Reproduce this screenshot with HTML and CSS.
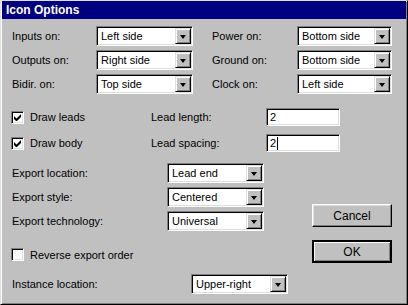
FILE: index.html
```html
<!DOCTYPE html>
<html lang="en">
  <head>
    <meta charset="UTF-8" />
    <title>Icon Options</title>
    <link rel="stylesheet" href="styles.css">
  </head>
  <body>
    <div class="window">
      <div class="titlebar">Icon Options</div>

      <div class="content">
        <!-- pin sides -->
        <div class="sides">
          <div class="col">
            <div class="row"><span class="lbl w84">Inputs on:</span><div class="combo w97"><span class="val">Left side</span><span class="arrow"></span></div></div>
            <div class="row"><span class="lbl w84">Outputs on:</span><div class="combo w97"><span class="val">Right side</span><span class="arrow"></span></div></div>
            <div class="row"><span class="lbl w84">Bidir. on:</span><div class="combo w97"><span class="val">Top side</span><span class="arrow"></span></div></div>
          </div>
          <div class="col">
            <div class="row"><span class="lbl w85">Power on:</span><div class="combo w95"><span class="val">Bottom side</span><span class="arrow"></span></div></div>
            <div class="row"><span class="lbl w85">Ground on:</span><div class="combo w95"><span class="val">Bottom side</span><span class="arrow"></span></div></div>
            <div class="row"><span class="lbl w85">Clock on:</span><div class="combo w95"><span class="val">Left side</span><span class="arrow"></span></div></div>
          </div>
        </div>

        <!-- leads -->
        <div class="leads">
          <div class="crow">
            <label class="check w140"><span class="box checked"><svg width="7" height="7" viewBox="0 0 7 7"><path d="M0 2v3l2 2h1l4-4V0L2.5 4.5z" fill="#000"/></svg></span>Draw leads</label>
            <span class="lbl w115">Lead length:</span>
            <div class="field"><span class="val">2</span></div>
          </div>
          <div class="crow">
            <label class="check w140"><span class="box checked"><svg width="7" height="7" viewBox="0 0 7 7"><path d="M0 2v3l2 2h1l4-4V0L2.5 4.5z" fill="#000"/></svg></span>Draw body</label>
            <span class="lbl w115">Lead spacing:</span>
            <div class="field"><span class="val">2</span><span class="caret"></span></div>
          </div>
        </div>

        <!-- export -->
        <div class="lower">
          <div class="left-col">
            <div class="row"><span class="lbl w155">Export location:</span><div class="combo w97"><span class="val">Lead end</span><span class="arrow"></span></div></div>
            <div class="row"><span class="lbl w155">Export style:</span><div class="combo w97"><span class="val">Centered</span><span class="arrow"></span></div></div>
            <div class="row"><span class="lbl w155">Export technology:</span><div class="combo w97"><span class="val">Universal</span><span class="arrow"></span></div></div>
            <label class="check reverse"><span class="box"></span>Reverse export order</label>
          </div>
          <div class="right-col">
            <button class="btn cancel">Cancel</button>
            <button class="btn ok">OK</button>
          </div>
        </div>

        <div class="row instance"><span class="lbl w179">Instance location:</span><div class="combo w97"><span class="val">Upper-right</span><span class="arrow"></span></div></div>
      </div>
    </div>
  </body>
</html>
```

FILE: styles.css
```css
body,
html {
  margin: 0;
  padding: 0;
}
body {
  font-family: "Liberation Sans", Arial, sans-serif;
  font-size: 11px;
  color: #000;
}
/* the dialog frame, win95 raised edge */
.window {
  width: 408px;
  height: 305px;
  box-sizing: border-box;
  background: #c0c0c0;
  border: 1px solid;
  border-color: #dfdfdf #000 #000 #dfdfdf;
  box-shadow: inset 1px 1px #fff, inset -1px -1px #808080;
  padding: 0 1px 1px 1px;
}
.titlebar {
  height: 18px;
  line-height: 18px;
  background: #000080;
  color: #fff;
  font-weight: bold;
  font-size: 12px;
  padding-left: 4px;
}
.content {
  padding: 7px 0 0 10px;
}
.sides {
  display: flex;
  gap: 19px;
}
.col {
  display: flex;
  flex-direction: column;
  gap: 4px;
}
.row {
  display: flex;
  align-items: center;
  height: 20px;
}
.lbl {
  white-space: nowrap;
}
.w84 { width: 84px; }
.w85 { width: 85px; }
.w115 { width: 115px; }
.w140 { width: 140px; }
.w155 { width: 155px; }
.w179 { width: 179px; }
.w95 { width: 95px; }
.w97 { width: 97px; }

/* sunken combo box */
.combo,
.field {
  box-sizing: border-box;
  display: flex;
  align-items: center;
  background: #fff;
  border: 1px solid;
  border-color: #808080 #fff #fff #808080;
  box-shadow: inset 1px 1px #000, inset -1px -1px #dfdfdf;
}
.combo {
  height: 20px;
  padding: 1px;
}
.combo .val {
  flex: 1;
  padding-left: 3px;
  white-space: nowrap;
  overflow: hidden;
}
.arrow {
  box-sizing: border-box;
  width: 16px;
  height: 16px;
  background: #c0c0c0;
  border: 1px solid;
  border-color: #dfdfdf #000 #000 #dfdfdf;
  box-shadow: inset 1px 1px #fff, inset -1px -1px #808080;
  display: flex;
  align-items: center;
  justify-content: center;
}
.arrow::after {
  content: "";
  border-left: 3.5px solid transparent;
  border-right: 3.5px solid transparent;
  border-top: 4px solid #000;
  margin-top: 1px;
}

.leads {
  margin-top: 14px;
  display: flex;
  flex-direction: column;
  gap: 8px;
}
.crow {
  display: flex;
  align-items: center;
  height: 18px;
}
.field {
  width: 74px;
  height: 18px;
  padding-left: 3px;
}
.caret {
  width: 1px;
  height: 13px;
  background: #000;
  margin-left: 1px;
}

.check {
  display: flex;
  align-items: center;
  gap: 6px;
  margin-left: -1px;
  white-space: nowrap;
}
.box {
  box-sizing: border-box;
  width: 13px;
  height: 13px;
  background: #fff;
  border: 1px solid;
  border-color: #808080 #fff #fff #808080;
  box-shadow: inset 1px 1px #000, inset -1px -1px #dfdfdf;
  display: flex;
  align-items: center;
  justify-content: center;
}

.lower {
  margin-top: 11px;
  display: flex;
}
.left-col {
  width: 300px;
  display: flex;
  flex-direction: column;
  gap: 4px;
}
.reverse {
  margin-top: 13px;
  height: 13px;
}
.right-col {
  display: flex;
  flex-direction: column;
}
.btn {
  box-sizing: border-box;
  width: 80px;
  height: 23px;
  font-family: inherit;
  font-size: 12px;
  background: #c0c0c0;
  border: 1px solid;
  border-color: #fff #000 #000 #fff;
  box-shadow: inset -1px -1px #808080, inset 1px 1px #dfdfdf;
  padding: 0;
}
.cancel {
  margin-top: 41px;
}
.ok {
  margin-top: 13px;
  border: 2px solid #000;
  box-shadow: inset 1px 1px #fff, inset -1px -1px #808080;
}
.instance {
  margin-top: 11px;
}
```
